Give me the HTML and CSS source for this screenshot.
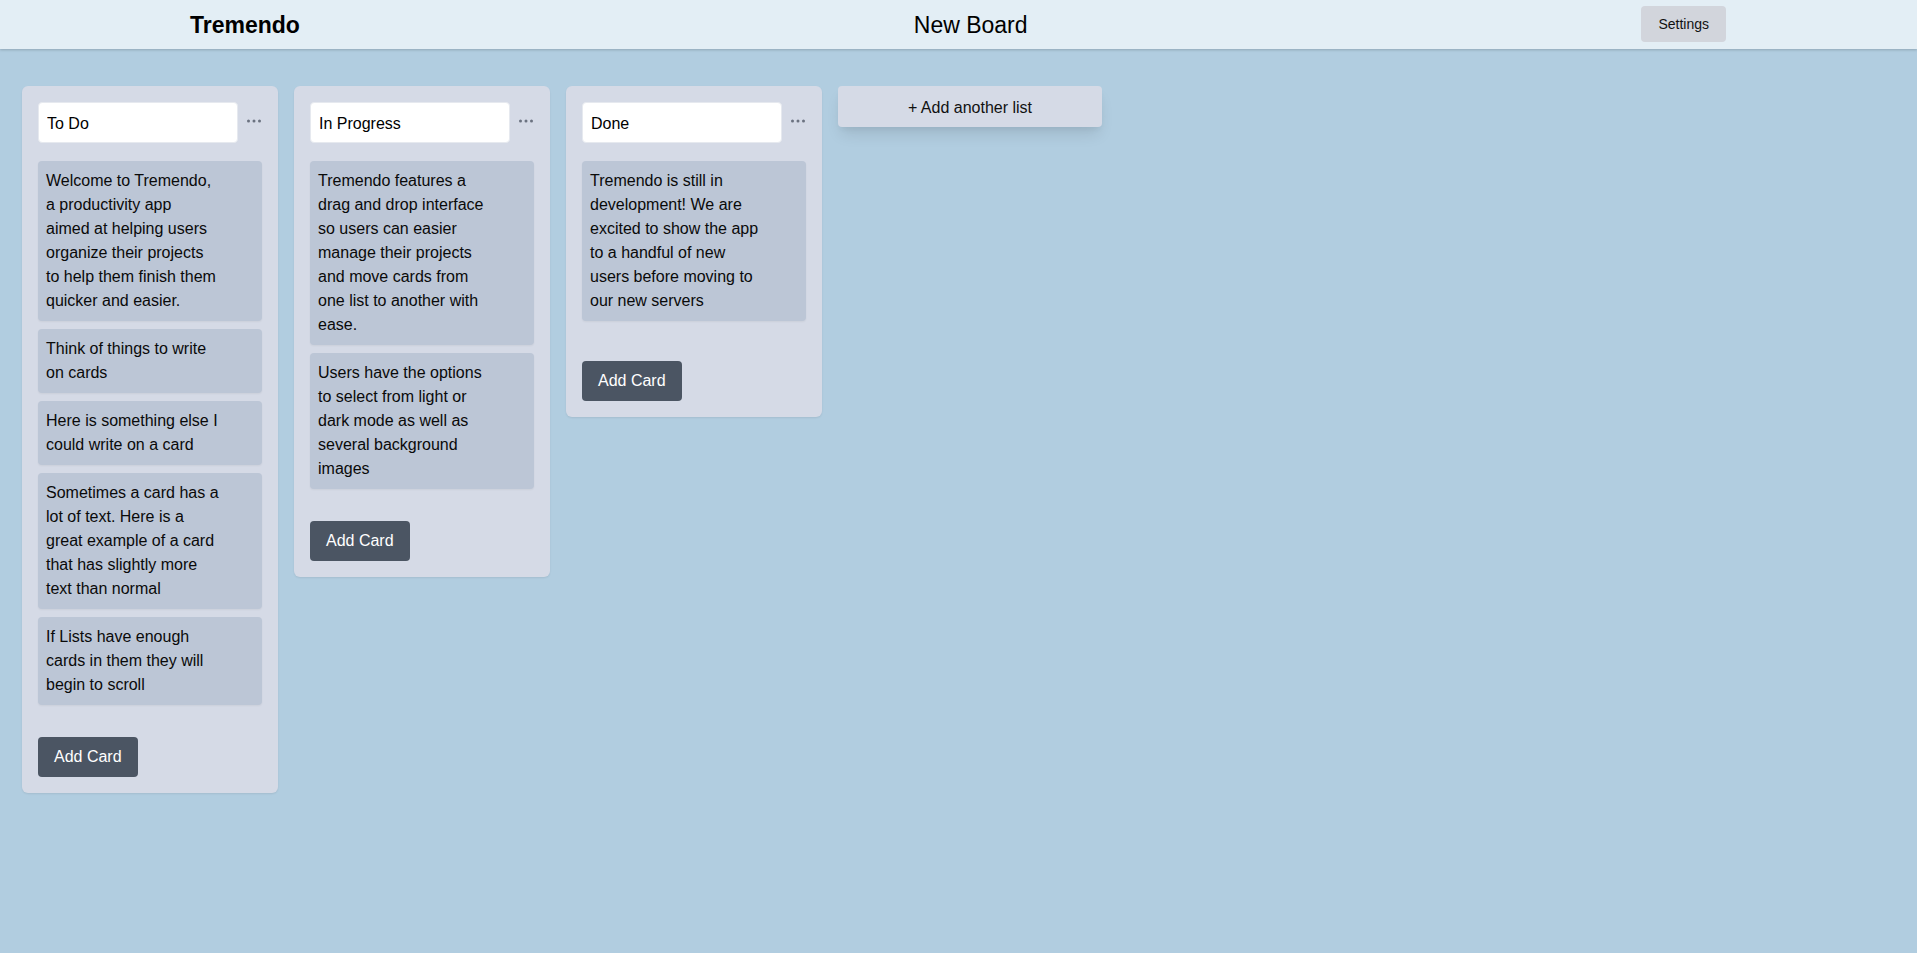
FILE: index.html
```html
<!DOCTYPE html>
<html lang="en">
<head>
<meta charset="utf-8">
<title>Tremendo</title>
<link rel="stylesheet" href="styles.css">
</head>
<body>
<header class="topbar">
  <div class="brand">Tremendo</div>
  <div class="board-title">New Board</div>
  <button class="settings-btn">Settings</button>
</header>
<main class="board">
  <section class="list">
    <div class="list-head">
      <input class="list-title" value="To Do">
      <svg class="dots" width="16" height="16" viewBox="0 0 16 16"><circle cx="2.5" cy="6" r="1.5"/><circle cx="8" cy="6" r="1.5"/><circle cx="13.5" cy="6" r="1.5"/></svg>
    </div>
    <div class="cards">
      <div class="card">Welcome to Tremendo, a productivity app aimed at helping users organize their projects to help them finish them quicker and easier.</div>
      <div class="card">Think of things to write on cards</div>
      <div class="card">Here is something else I could write on a card</div>
      <div class="card">Sometimes a card has a lot of text. Here is a great example of a card that has slightly more text than normal</div>
      <div class="card">If Lists have enough cards in them they will begin to scroll</div>
    </div>
    <button class="add-card">Add Card</button>
  </section>
  <section class="list">
    <div class="list-head">
      <input class="list-title" value="In Progress">
      <svg class="dots" width="16" height="16" viewBox="0 0 16 16"><circle cx="2.5" cy="6" r="1.5"/><circle cx="8" cy="6" r="1.5"/><circle cx="13.5" cy="6" r="1.5"/></svg>
    </div>
    <div class="cards">
      <div class="card">Tremendo features a drag and drop interface so users can easier manage their projects and move cards from one list to another with ease.</div>
      <div class="card">Users have the options to select from light or dark mode as well as several background images</div>
    </div>
    <button class="add-card">Add Card</button>
  </section>
  <section class="list">
    <div class="list-head">
      <input class="list-title" value="Done">
      <svg class="dots" width="16" height="16" viewBox="0 0 16 16"><circle cx="2.5" cy="6" r="1.5"/><circle cx="8" cy="6" r="1.5"/><circle cx="13.5" cy="6" r="1.5"/></svg>
    </div>
    <div class="cards">
      <div class="card">Tremendo is still in development! We are excited to show the app to a handful of new users before moving to our new servers</div>
    </div>
    <button class="add-card">Add Card</button>
  </section>
  <button class="add-list">+ Add another list</button>
</main>
</body>
</html>
```

FILE: styles.css
```css
* { box-sizing: border-box; }
html, body {
  margin: 0;
  padding: 0;
}
body {
  font-family: "Liberation Sans", Arial, Helvetica, sans-serif;
  font-size: 16px;
  line-height: 24px;
  color: #0a0a0a;
  background: #b1cde0;
  min-height: 100vh;
}
.topbar {
  height: 49px;
  background: #e3eef5;
  display: flex;
  align-items: center;
  justify-content: space-between;
  padding: 0 191px 0 190px;
  box-shadow: 0 1px 3px rgba(0,0,0,0.12), 0 1px 2px rgba(0,0,0,0.08);
  position: relative;
}
.brand {
  font-size: 23px;
  font-weight: bold;
  color: #000;
}
.board-title {
  font-size: 23px;
  color: #000;
}
.settings-btn {
  font-family: inherit;
  font-size: 14px;
  line-height: 20px;
  color: #111;
  background: #d2d5dc;
  border: none;
  border-radius: 4px;
  padding: 8px 17px;
  margin-top: -1px;
}
.board {
  display: flex;
  align-items: flex-start;
  gap: 16px;
  padding: 37px 22px;
}
.list {
  width: 256px;
  flex: none;
  background: #d5dae6;
  border-radius: 6px;
  padding: 16px;
  box-shadow: 0 1px 2px rgba(0,0,0,0.08);
}
.list-head {
  display: flex;
  align-items: center;
  justify-content: space-between;
  margin-bottom: 18px;
}
.list-title {
  width: 200px;
  height: 41px;
  border: 1px solid #e6e9ef;
  border-radius: 4px;
  background: #fff;
  font-family: inherit;
  font-size: 16px;
  color: #000;
  padding: 2px 8px 0;
  outline: none;
}
.dots {
  fill: #6b7280;
  flex: none;
}
.cards {
  min-height: 176px;
}
.card {
  background: #bcc6d6;
  border-radius: 4px;
  padding: 8px 43px 8px 8px;
  margin-bottom: 8px;
  box-shadow: 0 1px 2px rgba(0,0,0,0.05);
}
.add-card {
  margin-top: 24px;
  font-family: inherit;
  font-size: 16px;
  line-height: 24px;
  color: #fff;
  background: #4b5563;
  border: none;
  border-radius: 4px;
  padding: 8px 16px;
}
.add-list {
  width: 264px;
  flex: none;
  height: 41px;
  padding: 2px 0 0;
  font-family: inherit;
  font-size: 16px;
  line-height: 24px;
  color: #111;
  background: #d5dae6;
  border: none;
  border-radius: 4px;
  box-shadow: 0 10px 15px -3px rgba(0,0,0,0.1), 0 4px 6px -2px rgba(0,0,0,0.05);
}
```
